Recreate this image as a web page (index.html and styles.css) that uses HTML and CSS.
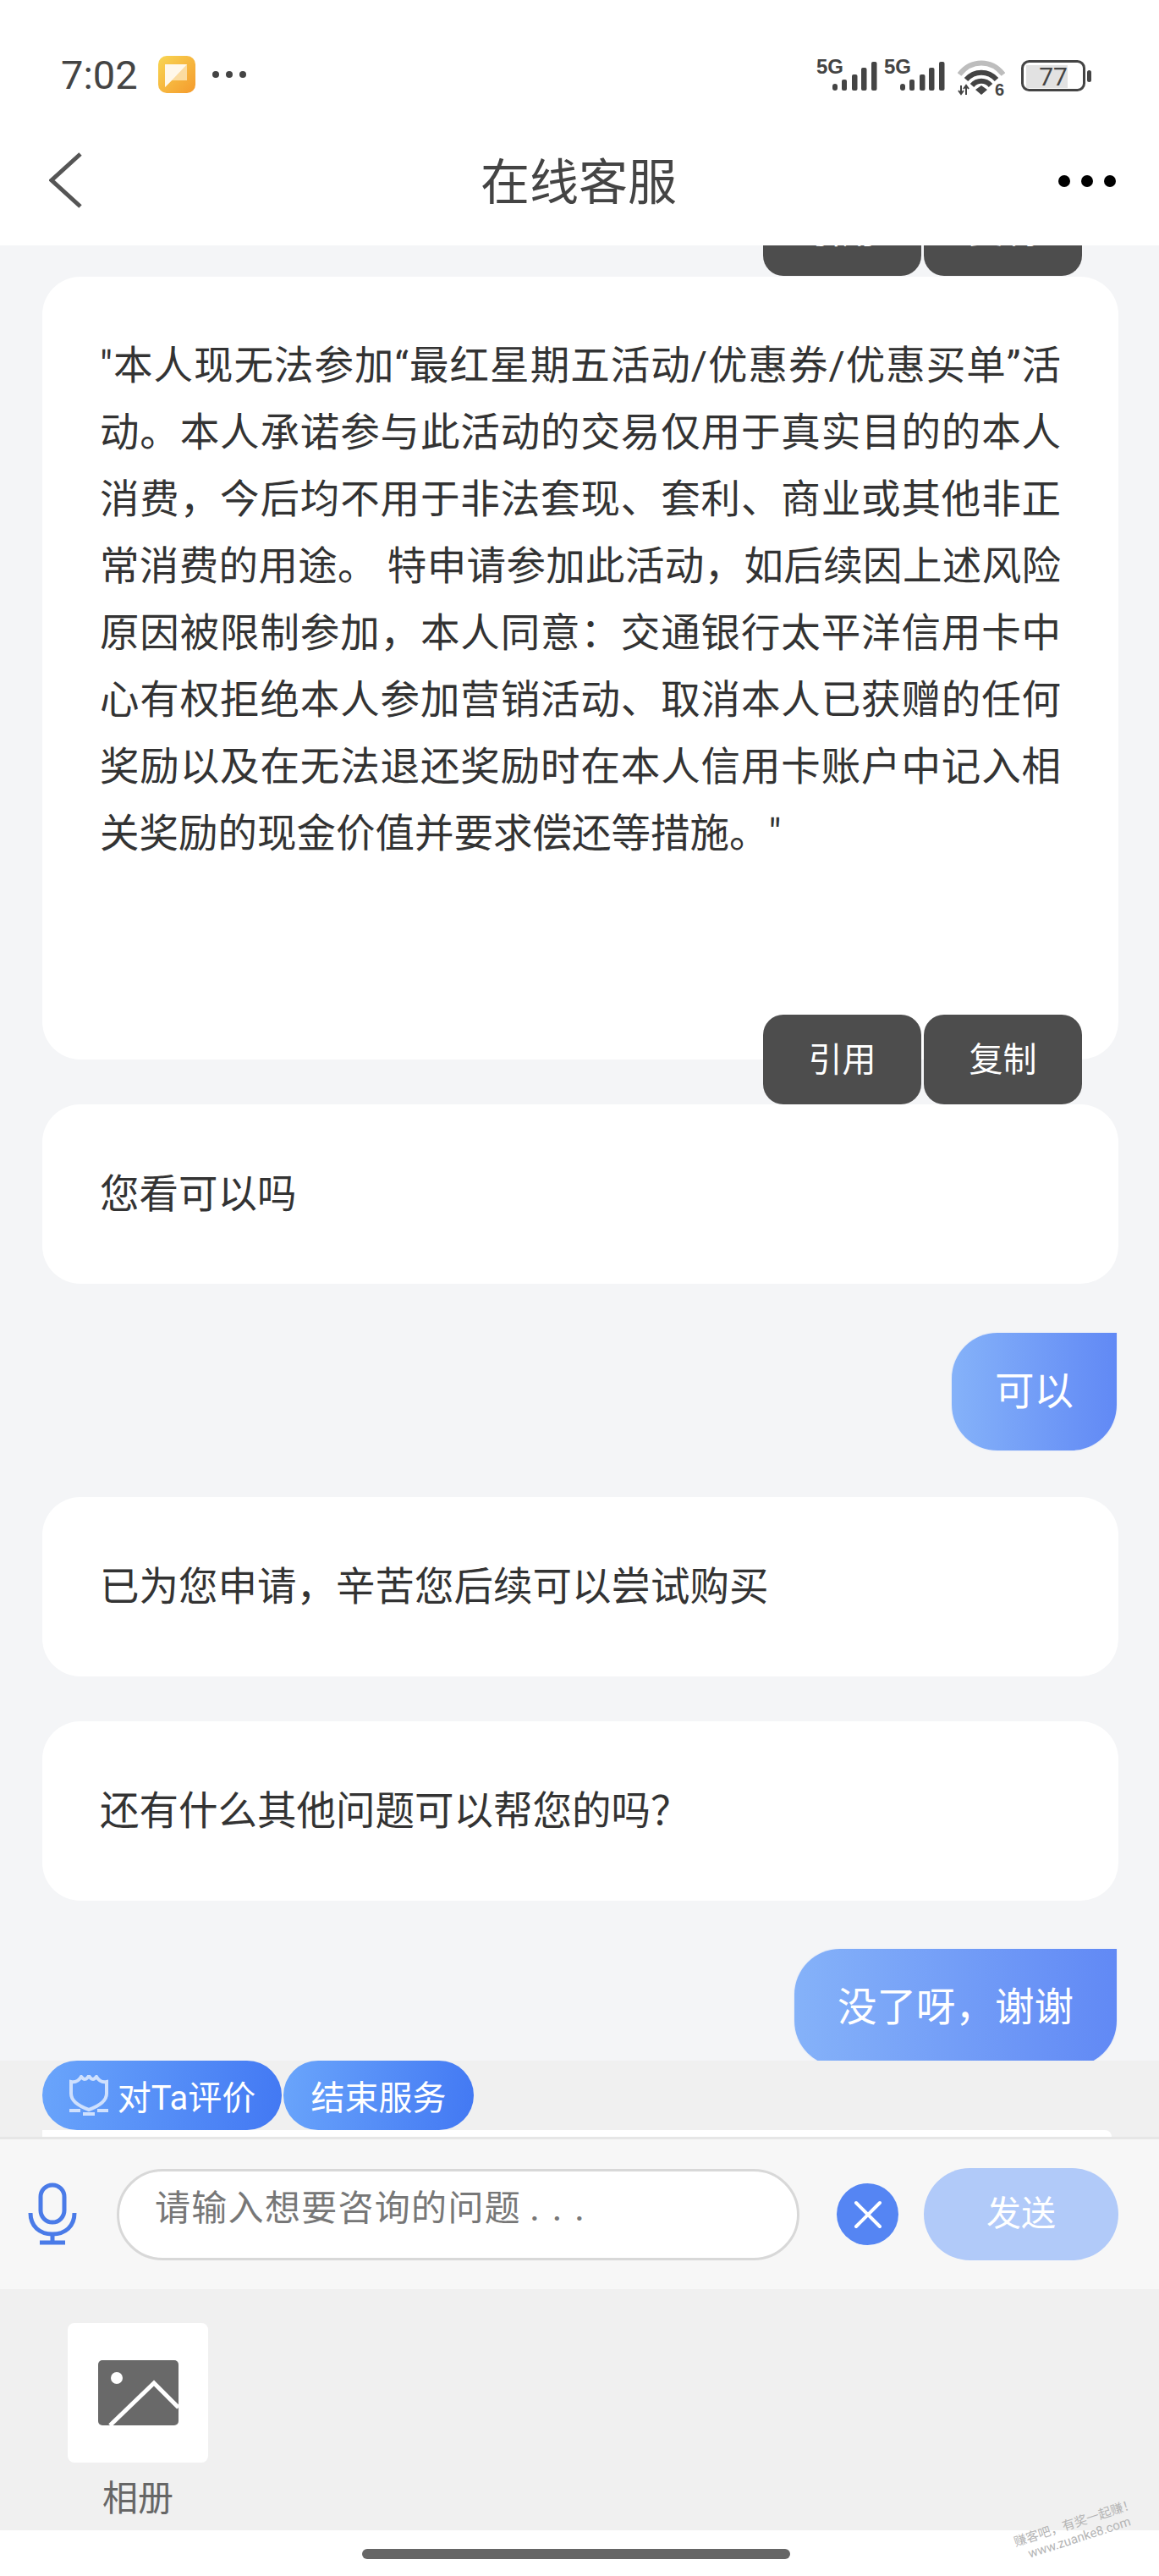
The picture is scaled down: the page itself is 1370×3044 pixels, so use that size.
FILE: index.html
```html
<!DOCTYPE html>
<html lang="zh-CN">
<head>
    <meta charset="UTF-8">
    <meta name="viewport" content="width=device-width, initial-scale=1.0">
    <title>在线客服</title>
    <link rel="stylesheet" href="styles.css">
</head>
<body>
    <div class="app">
        <div class="status-bar">
            <div class="status-left">
                <span class="time">7:02</span>
                <svg class="note-icon" width="44" height="44" viewBox="0 0 44 44">
                    <defs>
                        <linearGradient id="noteBg" x1="0" y1="0" x2="1" y2="1">
                            <stop offset="0" stop-color="#f8d653"/>
                            <stop offset="1" stop-color="#f59a2c"/>
                        </linearGradient>
                    </defs>
                    <rect width="44" height="44" rx="10" fill="url(#noteBg)"/>
                    <path d="M8 10h26v19H16L8 37z" fill="#fbdca0"/>
                    <path d="M8 37V10h26L16 29z" fill="#fff8ea"/>
                </svg>
                <span class="status-dots"><i></i><i></i><i></i></span>
            </div>
            <div class="status-right">
                <svg width="72" height="56" viewBox="0 -8 72 56">
                    <text x="0" y="19" class="net-label">5G</text>
                    <rect x="19" y="31" width="6" height="8" rx="3" fill="#444"/>
                    <rect x="30" y="26" width="6" height="13" rx="2" fill="#444"/>
                    <rect x="42" y="20" width="6.500" height="19" rx="2" fill="#444"/>
                    <rect x="53" y="12" width="6.500" height="27" rx="2" fill="#444"/>
                    <rect x="65" y="5" width="6.500" height="34" rx="2" fill="#444"/>
                </svg>
                <svg width="72" height="56" viewBox="0 -8 72 56">
                    <text x="0" y="19" class="net-label">5G</text>
                    <rect x="19" y="31" width="6" height="8" rx="3" fill="#444"/>
                    <rect x="30" y="26" width="6" height="13" rx="2" fill="#444"/>
                    <rect x="42" y="20" width="6.500" height="19" rx="2" fill="#444"/>
                    <rect x="53" y="12" width="6.500" height="27" rx="2" fill="#444"/>
                    <rect x="65" y="5" width="6.500" height="34" rx="2" fill="#444"/>
                </svg>
                <svg class="wifi" width="56" height="56" viewBox="0 -10 56 56">
                    <path d="M2 18C16 0 40 0 54 18" fill="none" stroke="#bdbdbd" stroke-width="6"/>
                    <path d="M10 24C20 13 36 13 46 24" fill="none" stroke="#444" stroke-width="6"/>
                    <path d="M17 31C23 24 33 24 39 31" fill="none" stroke="#444" stroke-width="6"/>
                    <path d="M21 36l7-5 7 5-7 6z" fill="#444"/>
                    <path d="M4 31v10M1 37l3 4 3-4M10 42V32M7 35l3-4 3 4" fill="none" stroke="#444" stroke-width="2"/>
                    <text x="44" y="43" class="wifi-label">6</text>
                </svg>
                <svg class="battery" width="84" height="56" viewBox="0 -11 84 56">
                    <rect x="6" y="6" width="49" height="27" fill="#e2e2e2"/>
                    <rect x="1.500" y="1.500" width="73" height="34" rx="8" fill="none" stroke="#444" stroke-width="3"/>
                    <rect x="78" y="12" width="5" height="14" rx="2.500" fill="#444"/>
                    <text x="38" y="30" class="battery-label">77</text>
                </svg>
            </div>
        </div>

        <header class="nav-bar">
            <svg class="nav-back" width="40" height="66" viewBox="0 0 40 66">
                <path d="M37 2L3 33l34 31" fill="none" stroke="#555" stroke-width="5"/>
            </svg>
            <h1 class="nav-title">在线客服</h1>
            <span class="nav-more"><i></i><i></i><i></i></span>
        </header>

        <main class="chat">
            <div class="msg-actions msg-actions-top">
                <button class="action-btn" type="button">引用</button>
                <button class="action-btn" type="button">复制</button>
            </div>
            <div class="bubble bubble-long">
                <span class="line">"本人现无法参加“最红星期五活动/优惠券/优惠买单”活</span>
                <span class="line">动。本人承诺参与此活动的交易仅用于真实目的的本人</span>
                <span class="line">消费，今后均不用于非法套现、套利、商业或其他非正</span>
                <span class="line">常消费的用途。 特申请参加此活动，如后续因上述风险</span>
                <span class="line">原因被限制参加，本人同意：交通银行太平洋信用卡中</span>
                <span class="line">心有权拒绝本人参加营销活动、取消本人已获赠的任何</span>
                <span class="line">奖励以及在无法退还奖励时在本人信用卡账户中记入相</span>
                <span class="line line-end">关奖励的现金价值并要求偿还等措施。"</span>
            </div>
            <div class="msg-actions">
                <button class="action-btn" type="button">引用</button>
                <button class="action-btn" type="button">复制</button>
            </div>
            <div class="bubble bubble-short">您看可以吗</div>
            <div class="bubble-mine bubble-gap-a">可以</div>
            <div class="bubble bubble-short bubble-gap-b">已为您申请，辛苦您后续可以尝试购买</div>
            <div class="bubble bubble-short bubble-gap-c">还有什么其他问题可以帮您的吗？</div>
            <div class="bubble-mine bubble-gap-d">没了呀，谢谢</div>
        </main>

        <div class="quick-wrap">
            <div class="quick-bar">
                <button class="pill pill-rate" type="button">
                    <svg width="48" height="48" viewBox="0 0 48 48">
                        <path d="M3 8C8 9 12 7 15 2 18 6 21 6 24 1 27 6 30 6 33 2 36 7 40 9 45 8V22C45 31 35 37 24 41 13 37 3 31 3 22Z" fill="none" stroke="#cfe0fd" stroke-width="4"/>
                        <path d="M1 42h13M34 42h13M17 46h14" stroke="#cfe0fd" stroke-width="4" fill="none"/>
                    </svg>
                    <span>对Ta评价</span>
                </button>
                <button class="pill pill-end" type="button">结束服务</button>
            </div>
            <div class="peek"></div>
        </div>

        <div class="composer">
            <svg class="mic" width="58" height="74" viewBox="0 0 58 74">
                <rect x="15" y="3" width="28" height="44" rx="14" fill="none" stroke="#4a7be8" stroke-width="5"/>
                <path d="M3 36c0 16 11 25 26 25s26-9 26-25" fill="none" stroke="#4a7be8" stroke-width="5"/>
                <path d="M29 61v10M14 71h30" fill="none" stroke="#4a7be8" stroke-width="5"/>
            </svg>
            <div class="msg-input">请输入想要咨询的问题<span class="input-dots">. . .</span></div>
            <button class="close-btn" type="button">
                <svg width="34" height="34" viewBox="0 0 34 34">
                    <path d="M3 3l28 28M31 3L3 31" fill="none" stroke="#fff" stroke-width="4" stroke-linecap="round"/>
                </svg>
            </button>
            <button class="send-btn" type="button">发送</button>
        </div>

        <div class="tools">
            <div class="tool">
                <div class="tool-tile">
                    <svg width="95" height="77" viewBox="0 0 95 77">
                        <rect width="95" height="77" rx="5" fill="#696969"/>
                        <circle cx="22" cy="21" r="7" fill="#fff"/>
                        <path d="M14 77l52-50 29 29" fill="none" stroke="#fff" stroke-width="5"/>
                    </svg>
                </div>
                <div class="tool-label">相册</div>
            </div>
        </div>

        <div class="home-area">
            <div class="home-bar"></div>
            <div class="watermark">赚客吧，有奖一起赚！<br>www.zuanke8.com</div>
        </div>
    </div>
</body>
</html>
```

FILE: styles.css
```css
* {
    box-sizing: border-box;
}
body, html {
    margin: 0;
    height: 100%;
    overflow: hidden;
    font-family: Roboto, 'Noto Sans CJK SC', sans-serif;
    background: #f4f5f7;
}
.app {
    height: 3044px;
    display: flex;
    flex-direction: column;
}

/* status bar */
.status-bar {
    height: 150px;
    flex: none;
    background: #fff;
    padding: 26px 79px 0 72px;
    display: flex;
    align-items: center;
    justify-content: space-between;
}
.status-left {
    display: flex;
    align-items: center;
}
.time {
    font-size: 47px;
    color: #444;
    width: 115px;
}
.note-icon {
    flex: none;
}
.status-dots {
    display: flex;
    gap: 8px;
    margin-left: 20px;
}
.status-dots i {
    width: 8px;
    height: 8px;
    border-radius: 50%;
    background: #444;
}
.status-right {
    display: flex;
    align-items: center;
    gap: 8px;
}
.net-label {
    font-family: 'Liberation Sans', sans-serif;
    font-size: 24px;
    font-weight: bold;
    fill: #444;
}
.wifi {
    margin-left: 7px;
}
.wifi-label {
    font-family: 'Liberation Sans', sans-serif;
    font-size: 20px;
    font-weight: bold;
    fill: #444;
}
.battery {
    margin-left: 11px;
}
.battery-label {
    font-size: 30px;
    fill: #444;
    text-anchor: middle;
}

/* nav */
.nav-bar {
    height: 140px;
    flex: none;
    background: #fff;
    padding: 0 53px 18px 53px;
    display: grid;
    grid-template-columns: 1fr auto 1fr;
    align-items: center;
    transform: none;
}
.nav-back {
    margin: 4px 0 0 5px;
}
.nav-title {
    margin: 0 0 0 -2px;
    font-size: 58px;
    font-weight: 400;
    color: #444;
}
.nav-more {
    justify-self: end;
    display: flex;
    gap: 13px;
    margin: 6px -2px 0 0;
}
.nav-more i {
    width: 14px;
    height: 14px;
    border-radius: 50%;
    background: #000;
}

/* chat */
.chat {
    height: 2145px;
    flex: none;
    overflow: hidden;
    padding: 0 48px 0 50px;
    display: flex;
    flex-direction: column;
    font-size: 46.500px;
    color: #333;
}
.bubble {
    flex: none;
    background: #fff;
    border-radius: 45px;
    padding: 0 68px;
}
.bubble-long {
    height: 925px;
    padding-top: 66px;
    margin-top: 1px;
}
.line {
    display: block;
    height: 79px;
    line-height: 79px;
    text-align: justify;
    text-align-last: justify;
    white-space: nowrap;
}
.line-end {
    text-align-last: left;
}
.msg-actions {
    flex: none;
    height: 106px;
    margin-top: -53px;
    margin-right: 43px;
    display: flex;
    justify-content: flex-end;
    gap: 3px;
}
.msg-actions-top {
    margin-top: -70px;
}
.action-btn {
    width: 187px;
    height: 106px;
    border: none;
    border-radius: 24px;
    padding: 0 0 7px;
    background: #4d4d4d;
    color: #fff;
    font: inherit;
    font-size: 40px;
}
.bubble-short {
    height: 212px;
    line-height: 212px;
}
.bubble-mine {
    flex: none;
    align-self: flex-end;
    height: 139px;
    line-height: 139px;
    margin-right: 2px;
    padding: 0 51px;
    color: #fff;
    border-radius: 54px 0 54px 54px;
    background: linear-gradient(90deg, #85b2f9, #6189f5);
    box-shadow: 0 0 2px #cfdcf8;
}
.bubble-gap-a {
    margin-top: 58px;
}
.bubble-gap-b {
    margin-top: 55px;
}
.bubble-gap-c {
    margin-top: 53px;
}
.bubble-gap-d {
    margin-top: 57px;
}

/* quick actions */
.quick-wrap {
    flex: none;
    padding-left: 50px;
    background: #f0f0f0;
}
.quick-bar {
    height: 82px;
    display: flex;
    gap: 2px;
}
.pill {
    height: 82px;
    border: none;
    border-radius: 41px;
    padding: 0;
    color: #fff;
    font: inherit;
    font-size: 40px;
    white-space: nowrap;
    display: flex;
    align-items: center;
    justify-content: center;
    background: linear-gradient(100deg, #6aa5fb, #4278f3);
}
.pill-rate {
    width: 283px;
    gap: 10px;
}
.pill-end {
    width: 225px;
}
.peek {
    height: 8px;
    margin-right: 56px;
    background: #fff;
    border-top-right-radius: 8px;
}

/* composer */
.composer {
    height: 180px;
    flex: none;
    background: #f7f7f7;
    border-top: 3px solid #e6e6e6;
    padding: 0 48px 0 33px;
    display: flex;
    align-items: center;
}
.mic {
    flex: none;
    margin-top: -2px;
}
.msg-input {
    width: 807px;
    height: 108px;
    margin-left: 47px;
    border: 3px solid #d8d8d8;
    border-radius: 54px;
    background: #fff;
    padding-left: 42px;
    font-size: 42px;
    letter-spacing: 1.300px;
    line-height: 84px;
    color: #777;
}
.input-dots {
    margin-left: 10px;
    font-size: 46px;
    word-spacing: 1px;
    letter-spacing: 1px;
}
.close-btn {
    width: 73px;
    height: 73px;
    margin-left: 44px;
    padding: 0;
    border: none;
    border-radius: 50%;
    background: #5585f3;
    display: flex;
    align-items: center;
    justify-content: center;
}
.send-btn {
    width: 230px;
    height: 109px;
    margin-left: 30px;
    border: none;
    border-radius: 55px;
    padding: 0 0 9px;
    background: #b1caf9;
    color: #fff;
    font: inherit;
    font-size: 41px;
}

/* bottom panel */
.tools {
    height: 285px;
    flex: none;
    background: #f0f0f0;
    padding: 40px 0 0 80px;
}
.tool {
    width: 166px;
}
.tool-tile {
    height: 165px;
    border-radius: 8px;
    background: #fff;
    display: flex;
    align-items: center;
    justify-content: center;
}
.tool-label {
    margin-top: 15px;
    font-size: 42px;
    line-height: 56px;
    color: #666;
    text-align: center;
}
.home-area {
    flex: 1;
    background: #fff;
    position: relative;
    padding-top: 22px;
}
.home-bar {
    width: 506px;
    height: 12px;
    margin-left: 428px;
    border-radius: 6px;
    background: #666;
}
.watermark {
    position: absolute;
    right: 22px;
    top: -18px;
    font-size: 15px;
    line-height: 18px;
    color: #b5b5b5;
    text-align: center;
    white-space: nowrap;
    transform: rotate(-18deg);
}
```
